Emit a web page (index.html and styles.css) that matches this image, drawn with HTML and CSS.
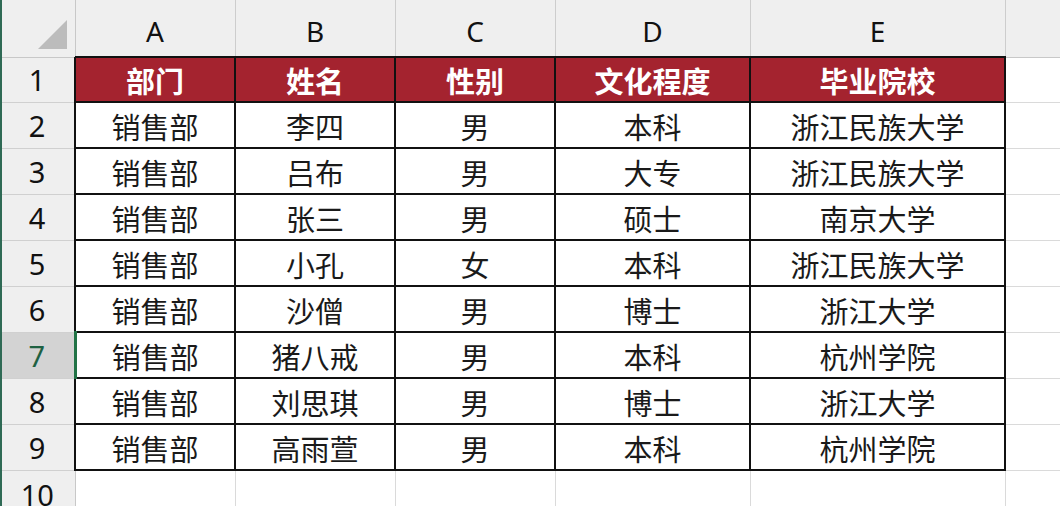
FILE: index.html
```html
<!DOCTYPE html>
<html lang="zh">
<head>
<meta charset="utf-8">
<link rel="stylesheet" href="styles.css">
</head>
<body>
<div class="sheet">
<table class="grid">
  <colgroup>
    <col class="c-rh"><col class="c-a"><col class="c-b"><col class="c-c"><col class="c-d"><col class="c-e"><col class="c-f">
  </colgroup>
  <tr class="r-head">
    <th class="corner"><span class="tri"></span></th>
    <th class="colh">A</th><th class="colh">B</th><th class="colh">C</th><th class="colh">D</th><th class="colh">E</th><th class="colh"></th>
  </tr>
  <tr class="r-first">
    <th class="rowh">1</th>
    <td class="t hd">部门</td><td class="t hd">姓名</td><td class="t hd">性别</td><td class="t hd">文化程度</td><td class="t hd">毕业院校</td><td class="e"></td>
  </tr>
  <tr class="r"><th class="rowh">2</th><td class="t">销售部</td><td class="t">李四</td><td class="t">男</td><td class="t">本科</td><td class="t">浙江民族大学</td><td class="e"></td></tr>
  <tr class="r"><th class="rowh">3</th><td class="t">销售部</td><td class="t">吕布</td><td class="t">男</td><td class="t">大专</td><td class="t">浙江民族大学</td><td class="e"></td></tr>
  <tr class="r"><th class="rowh">4</th><td class="t">销售部</td><td class="t">张三</td><td class="t">男</td><td class="t">硕士</td><td class="t">南京大学</td><td class="e"></td></tr>
  <tr class="r"><th class="rowh">5</th><td class="t">销售部</td><td class="t">小孔</td><td class="t">女</td><td class="t">本科</td><td class="t">浙江民族大学</td><td class="e"></td></tr>
  <tr class="r"><th class="rowh">6</th><td class="t">销售部</td><td class="t">沙僧</td><td class="t">男</td><td class="t">博士</td><td class="t">浙江大学</td><td class="e"></td></tr>
  <tr class="r"><th class="rowh sel">7</th><td class="t">销售部</td><td class="t">猪八戒</td><td class="t">男</td><td class="t">本科</td><td class="t">杭州学院</td><td class="e"></td></tr>
  <tr class="r"><th class="rowh">8</th><td class="t">销售部</td><td class="t">刘思琪</td><td class="t">男</td><td class="t">博士</td><td class="t">浙江大学</td><td class="e"></td></tr>
  <tr class="r"><th class="rowh">9</th><td class="t">销售部</td><td class="t">高雨萱</td><td class="t">男</td><td class="t">本科</td><td class="t">杭州学院</td><td class="e"></td></tr>
  <tr class="r-last"><th class="rowh last">10</th><td class="e"></td><td class="e"></td><td class="e"></td><td class="e"></td><td class="e"></td><td class="e"></td></tr>
</table>
</div>
</body>
</html>
```
FILE: styles.css
```css
html, body {
  margin: 0;
  padding: 0;
  background: #ffffff;
}
.sheet {
  width: 1060px;
  height: 506px;
  overflow: hidden;
  border-left: 2px solid #2f6a55;
  box-sizing: border-box;
}
.grid {
  border-collapse: collapse;
  table-layout: fixed;
  width: 1113px;
  margin-left: -2px;
  font-family: "Noto Sans", "Noto Sans CJK SC", sans-serif;
  color: #1a1a1a;
}
.c-rh { width: 75px; }
.c-a { width: 160px; }
.c-b { width: 160px; }
.c-c { width: 160px; }
.c-d { width: 195px; }
.c-e { width: 255px; }
.c-f { width: 108px; }

.r-head { height: 57px; }
.r-first { height: 45px; }
.r { height: 46px; }
.r-last { height: 40px; }

th, td {
  padding: 0;
  text-align: center;
  vertical-align: middle;
  overflow: hidden;
  white-space: nowrap;
}
.corner {
  position: relative;
  background: #efefef;
  border-right: 1px solid #c8c8c8;
  border-bottom: 1px solid #c8c8c8;
}
.tri {
  position: absolute;
  right: 8px;
  bottom: 8px;
  width: 0;
  height: 0;
  border-left: 29px solid transparent;
  border-bottom: 29px solid #bcbcbc;
}
.colh {
  background: #efefef;
  font-weight: normal;
  font-size: 28px;
  padding-top: 5px;
  border-left: 1px solid #cdcdcd;
  border-right: 1px solid #cdcdcd;
  border-bottom: 1px solid #c8c8c8;
  color: #111;
}
.rowh {
  background: #efefef;
  font-weight: normal;
  font-size: 29px;
  border-right: 1px solid #c8c8c8;
  border-bottom: 1px solid #d0d0d0;
  color: #111;
}
.rowh.last {
  vertical-align: top;
  line-height: 1;
  padding-top: 9px;
}
.rowh.sel {
  background: #d3d3d3;
  color: #1e6142;
  border-right: 3px solid #217346;
}
.t {
  border: 2px solid #111;
  font-size: 29px;
  padding-top: 1px;
}
.hd {
  background: #a4232f;
  color: #ffffff;
  font-weight: bold;
}
.e {
  border: 1px solid #dadada;
}
```
